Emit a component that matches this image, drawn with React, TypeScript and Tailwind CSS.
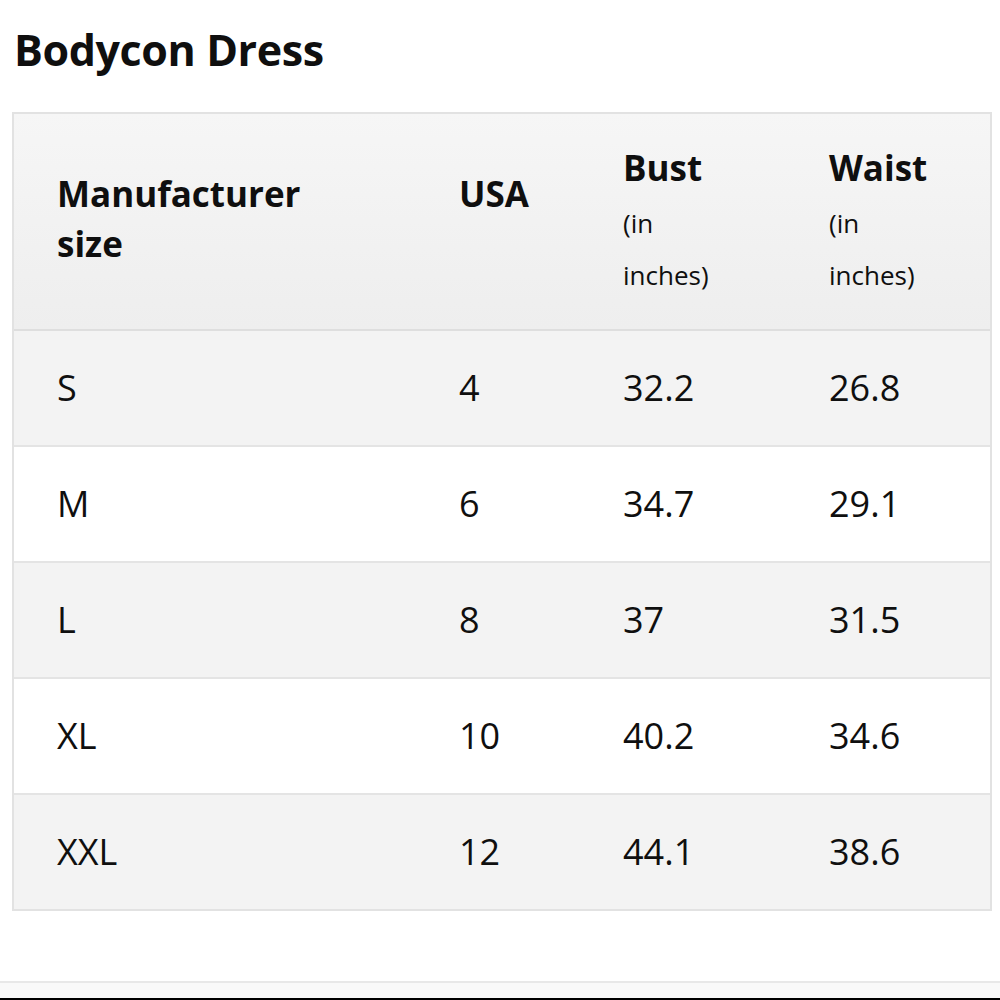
import React from "react";

const rows = [
  ["S", "4", "32.2", "26.8"],
  ["M", "6", "34.7", "29.1"],
  ["L", "8", "37", "31.5"],
  ["XL", "10", "40.2", "34.6"],
  ["XXL", "12", "44.1", "38.6"],
];

export default function App() {
  return (
    <div className="w-[1000px] h-[1000px] bg-white flex flex-col text-[#0f0f0f] font-['Open_Sans',_'Liberation_Sans',_sans-serif]">
      <div className="h-[112px] pt-[28px] pl-[14px] shrink-0">
        <h1 className="text-[43px] font-bold leading-[44px] tracking-[-0.4px]">Bodycon Dress</h1>
      </div>
      <div className="ml-[12px] w-[980px] border-2 border-[#e2e2e2]">
        <div className="grid grid-cols-[402px_164px_206px_1fr] h-[217px] bg-gradient-to-b from-[#f6f6f6] to-[#eeeeee] border-b-2 border-[#dedede]">
          <div className="pl-[43px] pt-[55px] text-[35px] font-bold leading-[50px]">
            Manufacturer
            <br />
            size
          </div>
          <div className="pl-[43px] pt-[55px] text-[35px] font-bold leading-[50px]">USA</div>
          <div className="pl-[43px] pt-[29px]">
            <div className="text-[35px] font-bold leading-[50px]">Bust</div>
            <div className="mt-1 text-[26px] leading-[52px]">
              (in
              <br />
              inches)
            </div>
          </div>
          <div className="pl-[43px] pt-[29px]">
            <div className="text-[35px] font-bold leading-[50px]">Waist</div>
            <div className="mt-1 text-[26px] leading-[52px]">
              (in
              <br />
              inches)
            </div>
          </div>
        </div>
        {rows.map((r, i) => (
          <div
            key={r[0]}
            className={
              "grid grid-cols-[402px_164px_206px_1fr] " +
              (i % 2 === 0 ? "bg-[#f3f3f3] " : "bg-white ") +
              (i < rows.length - 1 ? "h-[116px] border-b-2 border-[#e4e4e4]" : "h-[114px]")
            }
          >
            {r.map((c, j) => (
              <div key={j} className="pl-[43px] flex items-center text-[36px] leading-none">
                {c}
              </div>
            ))}
          </div>
        ))}
      </div>
      <div className="mt-auto h-[19px] border-t-2 border-[#e8e8e8] bg-[#f9f9f9] flex flex-col justify-end">
        <div className="h-[2px] bg-black" />
      </div>
    </div>
  );
}
